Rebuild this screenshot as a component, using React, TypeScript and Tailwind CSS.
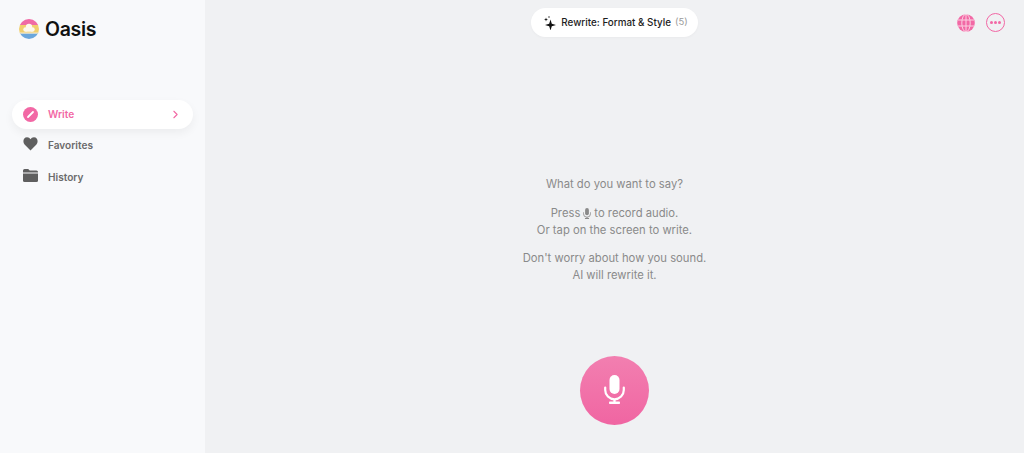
import { ChevronRight } from 'lucide-react';

const MicGlyph = ({ className }: { className: string }) => (
  <svg viewBox="0 0 21 29" className={className} fill="currentColor">
    <rect x="5.5" y="0" width="10" height="19" rx="5" />
    <path d="M1.2 12.500V15a9.300 9.300 0 0 0 18.600 0v-2.500" fill="none" stroke="currentColor" strokeWidth="2.200" strokeLinecap="round" />
    <rect x="9.400" y="24" width="2.200" height="3.500" />
    <rect x="5" y="26.500" width="11" height="2.500" rx="0.800" />
  </svg>
);

const Logo = () => (
  <svg viewBox="0 0 20 20" className="w-5 h-5 shrink-0">
    <defs>
      <clipPath id="logo-clip">
        <circle cx="10" cy="10" r="10" />
      </clipPath>
    </defs>
    <g clipPath="url(#logo-clip)">
      <rect width="20" height="6" fill="#f06aa5" />
      <rect y="6" width="20" height="8" fill="#f0cf6e" />
      <rect y="14" width="20" height="6" fill="#6ba7dc" />
      <rect y="13.500" width="20" height="1.200" fill="#f7eccb" />
      <circle cx="10" cy="8" r="3.200" fill="#fdf8ec" />
      <circle cx="6.500" cy="10.500" r="2.200" fill="#fdf8ec" />
      <circle cx="13.500" cy="10.500" r="2.200" fill="#fdf8ec" />
      <rect x="6.500" y="9.500" width="7" height="3.200" fill="#fdf8ec" />
    </g>
  </svg>
);

const App = () => {
  return (
    <div className="flex h-[453px] w-[1024px] overflow-hidden bg-[#f0f1f3] font-['Inter',sans-serif]">
      <aside className="w-[205px] shrink-0 bg-[#f8f9fb] pl-3 pr-3">
        <div className="flex items-start gap-[6px] pt-[19px] pl-[7px] h-[100px]">
          <Logo />
          <span className="font-semibold text-[19.5px] leading-5 tracking-[-0.3px] text-[#111]">Oasis</span>
        </div>
        <nav className="flex flex-col">
          <div className="flex items-center h-[29px] rounded-full bg-white shadow-[0_4px_10px_rgba(0,0,0,0.05)] pl-[11px] pr-[11px]">
            <span className="flex items-center justify-center w-[15px] h-[15px] rounded-full bg-[#f268a5]">
              <svg viewBox="0 0 15 15" className="w-[15px] h-[15px]">
                <path d="M5 10l5-5" stroke="#fff" strokeWidth="1.800" strokeLinecap="round" />
              </svg>
            </span>
            <span className="ml-[10px] text-[10.1px] font-semibold text-[#f268a5]">Write</span>
            <ChevronRight className="ml-auto w-[13px] h-[13px] text-[#f268a5]" strokeWidth={2} />
          </div>
          <div className="flex items-center h-[32px] pt-[2px] pl-[11px]">
            <svg viewBox="0 0 24 24" className="w-[15px] h-[15px] -mt-[5px] text-[#5f5f5f]" fill="currentColor">
              <path d="M12 23 2.500 13.500C-1 9.500 .5 2 6.500 2c2.500 0 4.300 1.300 5.500 3 1.200-1.700 3-3 5.500-3 6 0 7.500 7.500 4 11.500z" />
            </svg>
            <span className="ml-[10px] text-[10.1px] font-semibold text-[#6b6b6b]">Favorites</span>
          </div>
          <div className="flex items-center h-[32px] pt-[2px] pl-[11px]">
            <svg viewBox="0 0 15 13" className="w-[15px] h-[13px] -mt-[6px] text-[#5f5f5f]" fill="currentColor">
              <path d="M0 1.500A1.500 1.500 0 0 1 1.500 0h3.700l1.500 1.500h6.800A1.500 1.500 0 0 1 15 3v.500H0z" />
              <path d="M0 4.500h15v7A1.500 1.500 0 0 1 13.500 13h-12A1.500 1.500 0 0 1 0 11.500z" />
            </svg>
            <span className="ml-[10px] text-[10.1px] font-semibold text-[#6b6b6b]">History</span>
          </div>
        </nav>
      </aside>

      <main className="relative flex-1 flex flex-col items-center">
        <div className="mt-2 flex items-center h-[29px] rounded-full bg-white pl-3 pr-[10px] shadow-[0_1px_3px_rgba(0,0,0,0.03)]">
          <svg viewBox="0 0 14 14" className="w-[14px] h-[14px] text-[#111]" fill="currentColor">
            <path d="M7.500 3.500 8.800 7.700 13 9 8.800 10.300 7.500 14.500 6.200 10.300 2 9 6.200 7.700z" />
            <path d="M3 1.500 3.500 3 5 3.500 3.500 4 3 5.500 2.500 4 1 3.500 2.500 3z" />
            <circle cx="6" cy="1" r="0.700" />
          </svg>
          <span className="ml-1 text-[9.85px] font-medium text-[#1d1d1d]">Rewrite: Format &amp; Style</span>
          <span className="ml-1 text-[9.5px] text-[#9a9a9a]">(5)</span>
        </div>

        <div className="absolute top-[13px] right-[19px] flex items-center gap-[11px]">
          <svg viewBox="0 0 18 18" className="w-[18px] h-[18px]">
            <circle cx="9" cy="9" r="8.800" fill="#f268a5" />
            <g stroke="#fbd0e2" strokeWidth="1" fill="none">
              <ellipse cx="9" cy="9" rx="4.200" ry="8.800" />
              <path d="M9 .5v17M1 6h16M1 12h16" />
            </g>
          </svg>
          <div className="flex items-center justify-center gap-[1.5px] w-[19px] h-[19px] rounded-full border-[1.5px] border-[#f268a5]">
            <span className="w-[2.5px] h-[2.5px] rounded-full bg-[#f268a5]" />
            <span className="w-[2.5px] h-[2.5px] rounded-full bg-[#f268a5]" />
            <span className="w-[2.5px] h-[2.5px] rounded-full bg-[#f268a5]" />
          </div>
        </div>

        <div className="mt-[139px] flex flex-col items-center gap-[11.5px] text-[11.25px] leading-[17px] text-[#8a8a8a] text-center">
          <p>What do you want to say?</p>
          <div>
            <p className="flex items-center justify-center gap-[3px]">
              Press <MicGlyph className="w-[8px] h-[11px]" /> to record audio.
            </p>
            <p>Or tap on the screen to write.</p>
          </div>
          <div>
            <p>Don't worry about how you sound.</p>
            <p>AI will rewrite it.</p>
          </div>
        </div>

        <button className="mt-[72px] flex items-center justify-center w-[69px] h-[69px] pb-[2px] rounded-full bg-gradient-to-b from-[#f27fb0] to-[#f065a2]">
          <MicGlyph className="w-[21px] h-[29px] text-white" />
        </button>
      </main>
    </div>
  );
};

export default App;
